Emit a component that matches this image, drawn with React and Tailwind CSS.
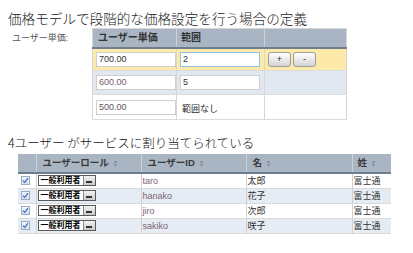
const font = "font-['Liberation_Sans','Noto_Sans_CJK_JP',sans-serif]"

function SortIcon() {
  return (
    <svg width="5" height="7" viewBox="0 0 5 7" className="inline-block ml-[4px]">
      <path d="M2.5 0.5 L4.5 2.8 H0.5 Z M2.5 6.5 L4.5 4.2 H0.5 Z" fill="#7d8897" />
    </svg>
  )
}

function Check() {
  return (
    <span className="flex w-[9px] h-[9px] items-center justify-center border border-[#9aadc4] bg-linear-to-b from-[#f3f6f9] to-[#d6dfea]">
      <svg width="7" height="7" viewBox="0 0 7 7">
        <path d="M1 3.6 L2.8 5.4 L6 1.2" stroke="#3a68c4" strokeWidth="1.2" fill="none" />
      </svg>
    </span>
  )
}

function RoleSelect() {
  return (
    <div className="flex h-[11px] w-[58px] border border-[#5a5a5a] bg-white">
      <span className="flex-1 pl-[2px] text-[8px] leading-[9px] font-bold text-black">一般利用者</span>
      <span className="flex w-[12px] items-end justify-center border-l border-[#8a8a8a] bg-linear-to-b from-[#f3f3f3] to-[#c8c8c8] pb-[2px]">
        <span className="h-[2px] w-[6px] bg-[#333]" />
      </span>
    </div>
  )
}

function Field({ value, focus, color = 'text-[#333]' }) {
  return (
    <div className={`h-[15px] w-[80px] border bg-white pl-[2px] text-[9px] leading-[13px] ${color} ${focus ? 'border-[#8ec3df]' : 'border-[#cfcfcf]'}`}>
      {value}
    </div>
  )
}

function Btn({ children }) {
  return (
    <div className="flex h-[15px] w-[23px] items-center justify-center rounded-[3px] border border-[#9c9c9c] bg-linear-to-b from-white to-[#d4d4d4] text-[9px] leading-none text-[#333]">
      {children}
    </div>
  )
}

const tiers = [
  { price: '700.00', range: '2', bg: 'bg-[#fdeaaa]', h: 'h-[23px]', color: 'text-[#333]', focus: true, buttons: true },
  { price: '600.00', range: '5', bg: 'bg-[#e2e8ef]', h: 'h-[24px]', color: 'text-[#7b5c70]' },
  { price: '500.00', range: null, bg: 'bg-white', h: 'h-[24px]', color: 'text-[#5c5258]' },
]

const users = [
  { id: 'taro', first: '太郎', bg: 'bg-white' },
  { id: 'hanako', first: '花子', bg: 'bg-[#e6ecf3]' },
  { id: 'jiro', first: '次郎', bg: 'bg-white' },
  { id: 'sakiko', first: '咲子', bg: 'bg-[#e6ecf3]' },
]

export default function App() {
  return (
    <div className={`w-[413px] h-[253px] bg-white overflow-hidden ${font}`}>
      <div className="pl-[8px] pt-[9px] text-[13.6px] leading-[18px] font-light text-[#222] font-['Noto_Sans_CJK_JP',sans-serif]">
        価格モデルで段階的な価格設定を行う場合の定義
      </div>

      <div className="mt-[1px] flex">
        <div className="w-[92px] pl-[12px] pt-[4px] text-[9px] leading-[12px] text-[#555]">
          ユーザー単価<span className="text-[#8a5a9a]">:</span>
        </div>
        <table className="table-fixed border-collapse border border-[#d6d6d6]">
          <thead>
            <tr className="h-[19px] bg-[#a9b5c3] border-b-2 border-[#6f7e8e] text-left">
              <th className="w-[84px] pl-[5px] text-[10px] leading-[12px] font-bold text-[#333] border-r border-[#c9d1da]">ユーザー単価</th>
              <th className="w-[88px] pl-[4px] text-[10px] leading-[12px] font-bold text-[#333] border-r border-[#c9d1da]">範囲</th>
              <th className="w-[82px]" />
            </tr>
          </thead>
          <tbody>
            {tiers.map((t) => (
              <tr key={t.price} className={`${t.h} ${t.bg} border-b border-[#dcdcdc]`}>
                <td className="pl-[3px] border-r border-[#d6d6d6]">
                  <Field value={t.price} color={t.color} />
                </td>
                <td className="pl-[3px] border-r border-[#d6d6d6]">
                  {t.range === null ? (
                    <span className="pl-[2px] text-[9px] text-[#333]">範囲なし</span>
                  ) : (
                    <Field value={t.range} focus={t.focus} />
                  )}
                </td>
                <td className="pl-[3px]">
                  {t.buttons && (
                    <div className="flex gap-[2px]">
                      <Btn>+</Btn>
                      <Btn>-</Btn>
                    </div>
                  )}
                </td>
              </tr>
            ))}
          </tbody>
        </table>
      </div>

      <div className="mt-[15px] pl-[8px] text-[12.5px] leading-[16px] font-light text-[#111] font-['Noto_Sans_CJK_JP',sans-serif]">
        4ユーザー がサービスに割り当てられている
      </div>

      <div className="mt-[3px] pl-[18px]">
        <table className="table-fixed border-collapse">
          <thead>
            <tr className="h-[19px] bg-[#a9b5c3] border-b-2 border-[#6f7e8e] text-left text-[9.5px] leading-[12px] font-bold text-[#3a3a3a]">
              <th className="w-[18px] border-r border-[#c9d1da]" />
              <th className="w-[105px] pl-[6px] border-r border-[#c9d1da]">ユーザーロール<SortIcon /></th>
              <th className="w-[105px] pl-[6px] border-r border-[#c9d1da]">ユーザーID<SortIcon /></th>
              <th className="w-[106px] pl-[6px] border-r border-[#c9d1da]">名<SortIcon /></th>
              <th className="w-[39px] pl-[5px]">姓<SortIcon /></th>
            </tr>
          </thead>
          <tbody className="text-[9px] leading-[12px]">
            {users.map((u) => (
              <tr key={u.id} className={`h-[15px] ${u.bg} border-b border-[#dadada]`}>
                <td className="pl-[3px] border-r border-[#d2d2d2]">
                  <Check />
                </td>
                <td className="pl-[1px] border-r border-[#d2d2d2]">
                  <RoleSelect />
                </td>
                <td className="pl-[1px] text-[#7d6475] border-r border-[#d2d2d2]">{u.id}</td>
                <td className="pl-[1px] text-[#333] border-r border-[#d2d2d2]">{u.first}</td>
                <td className="pl-[1px] text-[#333]">富士通</td>
              </tr>
            ))}
          </tbody>
        </table>
      </div>
    </div>
  )
}
